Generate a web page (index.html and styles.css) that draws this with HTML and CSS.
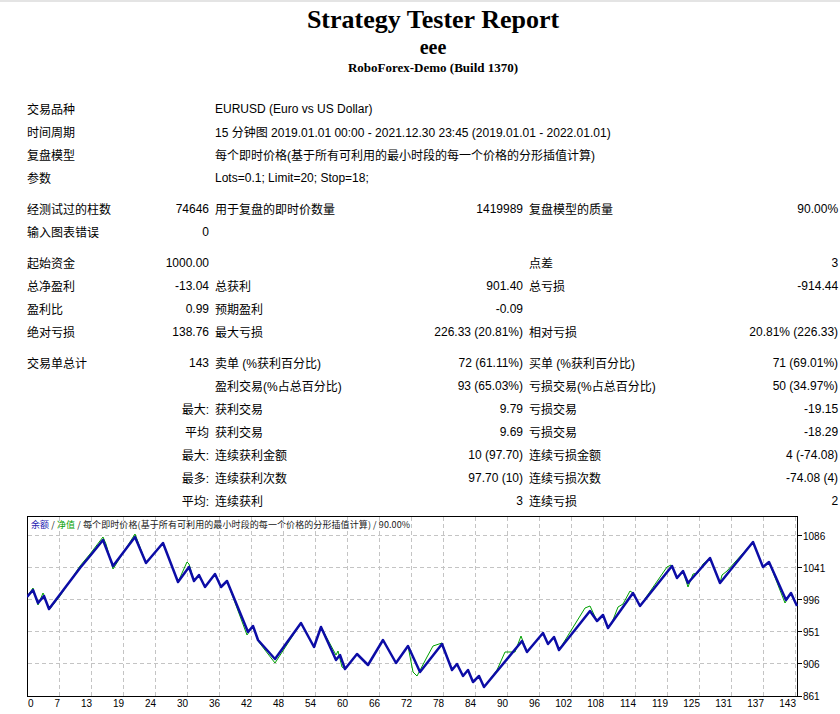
FILE: index.html
```html
<!DOCTYPE html>
<html lang="zh">
<head>
<meta charset="utf-8">
<title>Strategy Tester: eee</title>
<link rel="stylesheet" href="styles.css">
</head>
<body>
<div class="page">
  <header class="head">
    <div class="title">Strategy Tester Report</div>
    <div class="ea">eee</div>
    <div class="server">RoboForex-Demo (Build 1370)</div>
  </header>

  <table class="report">
    <colgroup>
      <col class="c1"><col class="c2"><col class="c3"><col class="c4"><col class="c5"><col class="c6">
    </colgroup>
    <tr><td colspan="2">交易品种</td><td colspan="4">EURUSD (Euro vs US Dollar)</td></tr>
    <tr><td colspan="2">时间周期</td><td colspan="4">15 分钟图 2019.01.01 00:00 - 2021.12.30 23:45 (2019.01.01 - 2022.01.01)</td></tr>
    <tr><td colspan="2">复盘模型</td><td colspan="4">每个即时价格(基于所有可利用的最小时段的每一个价格的分形插值计算)</td></tr>
    <tr><td colspan="2">参数</td><td colspan="4">Lots=0.1; Limit=20; Stop=18;</td></tr>
    <tr class="sp"><td colspan="6"></td></tr>
    <tr><td>经测试过的柱数</td><td class="r">74646</td><td>用于复盘的即时价数量</td><td class="r">1419989</td><td>复盘模型的质量</td><td class="r">90.00%</td></tr>
    <tr><td>输入图表错误</td><td class="r">0</td><td></td><td></td><td></td><td></td></tr>
    <tr class="sp"><td colspan="6"></td></tr>
    <tr><td>起始资金</td><td class="r">1000.00</td><td></td><td></td><td>点差</td><td class="r">3</td></tr>
    <tr><td>总净盈利</td><td class="r">-13.04</td><td>总获利</td><td class="r">901.40</td><td>总亏损</td><td class="r">-914.44</td></tr>
    <tr><td>盈利比</td><td class="r">0.99</td><td>预期盈利</td><td class="r">-0.09</td><td></td><td></td></tr>
    <tr><td>绝对亏损</td><td class="r">138.76</td><td>最大亏损</td><td class="r">226.33 (20.81%)</td><td>相对亏损</td><td class="r">20.81% (226.33)</td></tr>
    <tr class="sp"><td colspan="6"></td></tr>
    <tr><td>交易单总计</td><td class="r">143</td><td>卖单 (%获利百分比)</td><td class="r">72 (61.11%)</td><td>买单 (%获利百分比)</td><td class="r">71 (69.01%)</td></tr>
    <tr><td colspan="2"></td><td>盈利交易(%占总百分比)</td><td class="r">93 (65.03%)</td><td>亏损交易(%占总百分比)</td><td class="r">50 (34.97%)</td></tr>
    <tr><td colspan="2" class="r">最大:</td><td>获利交易</td><td class="r">9.79</td><td>亏损交易</td><td class="r">-19.15</td></tr>
    <tr><td colspan="2" class="r">平均</td><td>获利交易</td><td class="r">9.69</td><td>亏损交易</td><td class="r">-18.29</td></tr>
    <tr><td colspan="2" class="r">最大:</td><td>连续获利金额</td><td class="r">10 (97.70)</td><td>连续亏损金额</td><td class="r">4 (-74.08)</td></tr>
    <tr><td colspan="2" class="r">最多:</td><td>连续获利次数</td><td class="r">97.70 (10)</td><td>连续亏损次数</td><td class="r">-74.08 (4)</td></tr>
    <tr><td colspan="2" class="r">平均:</td><td>连续获利</td><td class="r">3</td><td>连续亏损</td><td class="r">2</td></tr>
  </table>

  <div class="chart">
    <svg class="chart-svg" width="813" height="197" viewBox="27 517 813 197" xmlns="http://www.w3.org/2000/svg">
      <rect x="27" y="517" width="813" height="197" fill="#ffffff"/>
      <g class="grid">
        <path d="M28 536.5H797M28 568.5H797M28 600.5H797M28 632.5H797M28 664.5H797"/>
        <path d="M59.5 518V697M91.5 518V697M123.5 518V697M155.5 518V697M187.5 518V697M219.5 518V697M251.5 518V697M283.5 518V697M315.5 518V697M347.5 518V697M379.5 518V697M411.5 518V697M443.5 518V697M475.5 518V697M507.5 518V697M539.5 518V697M571.5 518V697M603.5 518V697M635.5 518V697M667.5 518V697M699.5 518V697M731.5 518V697M763.5 518V697M795.5 518V697"/>
      </g>
      <rect class="frame" x="27.5" y="517.5" width="770" height="180"/>
      <path class="ticks" d="M798 536.5H802M798 568.5H802M798 600.5H802M798 632.5H802M798 664.5H802M798 697.5H802"/>

      <polyline class="equity" points="27,598 33,589 38,606 43,594 44,596 49,611 60,597 80,567 90,555 103,538 106,545 113,570 135,535 146,564 163,544 178,583 187,563 189,565 194,582 199,576 205,588 215,575 221,588 227,582 247,636 253,627 258,642 275,664 301,624 314,648 321,628 336,656 338,652 342,668 345,670 357,655 368,666 383,641 396,664 408,647 413,673 417,677 427,658 433,647 442,644 452,671 457,665 463,677 468,671 473,683 479,677 484,688 497,671 505,653 515,653 521,637 527,653 543,634 548,645 554,638 559,651 585,609 590,607 597,622 603,616 608,629 611,626 618,608 623,605 630,592 633,594 640,607 667,568 671,566 677,579 683,572 688,588 693,575 698,574 703,565 710,559 720,584 722,576 727,572 753,543 763,568 769,563 785,604 791,594 797,607"/>
      <polyline class="balance" points="27,598 33,591 38,604 44,597 49,610 80,569 90,557 103,541 113,567 135,538 146,564 163,544 178,583 189,568 194,582 199,576 205,588 215,575 221,588 227,582 248,633 253,627 258,641 275,660 301,624 314,648 321,628 336,661 340,656 345,670 357,655 368,666 383,641 396,664 408,647 420,673 442,645 452,671 457,665 463,677 468,671 473,683 479,677 484,688 522,642 527,653 543,634 548,645 554,638 559,651 590,612 597,622 603,616 608,629 633,594 640,607 672,567 677,579 683,572 688,584 710,559 720,584 753,543 763,568 769,563 786,601 791,594 797,607"/>

      <text class="legend" x="31" y="529" textLength="379" lengthAdjust="spacing"><tspan class="lg-bal">余额</tspan> / <tspan class="lg-eq">净值</tspan> / 每个即时价格(基于所有可利用的最小时段的每一个价格的分形插值计算) / 90.00%</text>

      <g class="ylab">
        <text x="803" y="541">1086</text>
        <text x="803" y="573">1041</text>
        <text x="803" y="605">996</text>
        <text x="803" y="637">951</text>
        <text x="803" y="669">906</text>
        <text x="803" y="701">861</text>
      </g>
      <g class="xlab">
        <text x="28" y="708" class="first">0</text>
        <text x="60" y="708">7</text>
        <text x="92" y="708">13</text>
        <text x="124" y="708">19</text>
        <text x="156" y="708">24</text>
        <text x="188" y="708">30</text>
        <text x="220" y="708">36</text>
        <text x="252" y="708">42</text>
        <text x="284" y="708">48</text>
        <text x="316" y="708">54</text>
        <text x="348" y="708">60</text>
        <text x="380" y="708">66</text>
        <text x="412" y="708">72</text>
        <text x="444" y="708">78</text>
        <text x="476" y="708">84</text>
        <text x="508" y="708">90</text>
        <text x="540" y="708">96</text>
        <text x="572" y="708">102</text>
        <text x="604" y="708">108</text>
        <text x="636" y="708">114</text>
        <text x="668" y="708">119</text>
        <text x="700" y="708">125</text>
        <text x="732" y="708">131</text>
        <text x="764" y="708">137</text>
        <text x="796" y="708">143</text>
      </g>
    </svg>
  </div>
</div>
</body>
</html>
```

FILE: styles.css
```css
html, body {
  margin: 0;
  padding: 0;
  overflow: hidden;
  background: #ffffff;
}

body {
  font-family: "Liberation Sans", "Noto Sans CJK SC", sans-serif;
  font-size: 12px;
  color: #000000;
  border-top: 2px solid #e4e4e4;
}

.page {
  width: 866px;
}

.head {
  text-align: center;
  font-family: "Liberation Serif", "Times New Roman", serif;
  font-weight: bold;
}

.title {
  font-size: 26px;
  line-height: 30px;
  padding-top: 3px;
}

.ea {
  font-size: 20px;
  line-height: 24px;
}

.server {
  font-size: 13px;
  line-height: 18px;
}

.report {
  margin: 20px 0 0 24px;
  border-collapse: collapse;
  table-layout: fixed;
  width: 817px;
}

.report .c1 { width: 96px; }
.report .c2 { width: 92px; }
.report .c3 { width: 188px; }
.report .c4 { width: 126px; }
.report .c5 { width: 174px; }
.report .c6 { width: 141px; }

.report td {
  padding: 0 3px;
  height: 23px;
  white-space: nowrap;
  vertical-align: middle;
  text-align: left;
  overflow: visible;
}

.report td.r {
  text-align: right;
}

.report tr.sp td {
  height: 8px;
}

.chart {
  margin: 4px 0 0 27px;
}

.chart-svg {
  display: block;
}

.grid path {
  fill: none;
  stroke: #c4c4c4;
  stroke-width: 1;
  stroke-dasharray: 4 3;
}

.frame {
  fill: none;
  stroke: #000000;
  stroke-width: 1;
}

.ticks {
  fill: none;
  stroke: #000000;
  stroke-width: 1;
}

.equity {
  fill: none;
  stroke: #00a000;
  stroke-width: 1;
  stroke-linejoin: round;
}

.balance {
  fill: none;
  stroke: #0c0ca6;
  stroke-width: 2.5;
  stroke-linejoin: round;
}

.legend {
  font-family: "Noto Sans CJK SC", "Liberation Sans", sans-serif;
  font-size: 9px;
  fill: #202020;
}

.lg-bal { fill: #1a1ab0; }
.lg-eq { fill: #00a000; }

.ylab text,
.xlab text {
  font-family: "Liberation Sans", "DejaVu Sans", sans-serif;
  font-size: 10px;
  fill: #000000;
}

.xlab text {
  text-anchor: end;
}

.xlab text.first {
  text-anchor: start;
}
```
